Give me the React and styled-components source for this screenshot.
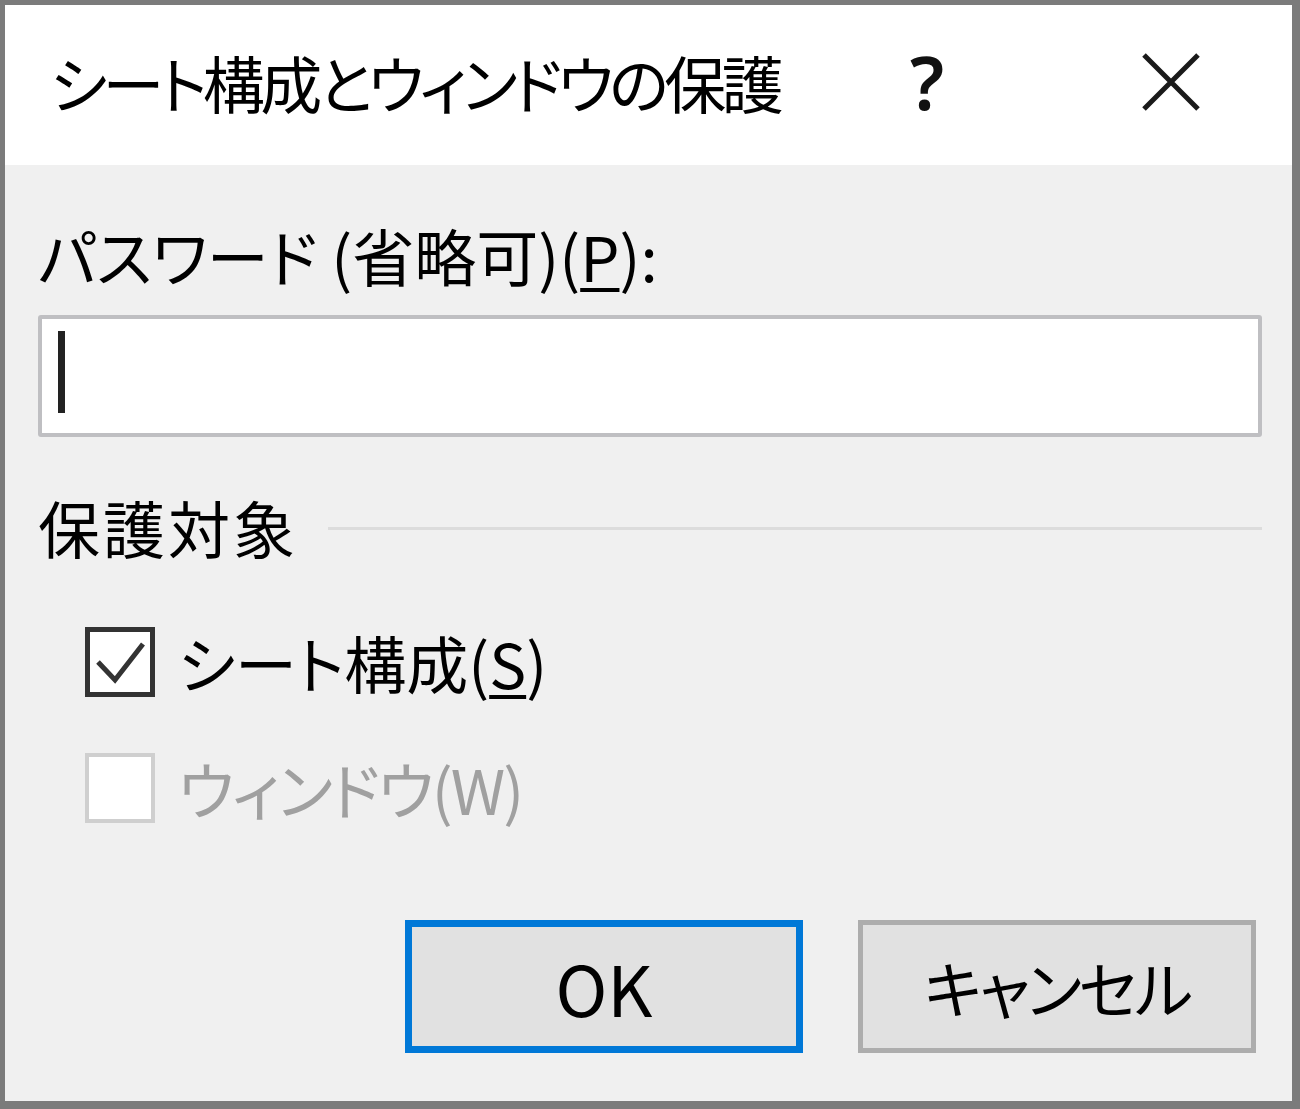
import React from 'react';
import styled, { createGlobalStyle } from 'styled-components';

const Global = createGlobalStyle`
  html, body { margin: 0; padding: 0; background: #f0f0f0; overflow: hidden; }
  body { font-family: "Noto Sans CJK JP", "Noto Sans", sans-serif; }
`;

const Window = styled.div`
  width: 1300px;
  height: 1109px;
  box-sizing: border-box;
  border-style: solid;
  border-color: #7b7b7b;
  border-width: 5px 8px 8px 5px;
  display: flex;
  flex-direction: column;
  background: #f0f0f0;
  font-family: "Noto Sans CJK JP", sans-serif;
  font-feature-settings: "palt";
  color: #000;
`;

const TitleBar = styled.header`
  height: 160px;
  flex: none;
  box-sizing: border-box;
  background: #fff;
  display: flex;
  align-items: center;
  padding: 0 71px 6px 45px;
`;

const Title = styled.h1`
  margin: 0;
  flex: 1;
  font-size: 62px;
  font-weight: 400;
  letter-spacing: -4.5px;
  line-height: 1;
  white-space: nowrap;
`;

const HelpButton = styled.div`
  width: 70px;
  margin-right: 159px;
  text-align: center;
  font-family: "Noto Sans", sans-serif;
  font-size: 74px;
  font-weight: 600;
  line-height: 1;
  color: #111;
`;

const CloseButton = styled.div`
  width: 100px;
  height: 80px;
  display: flex;
  align-items: center;
  justify-content: center;
`;

const Body = styled.main`
  flex: 1;
  display: flex;
  flex-direction: column;
  padding: 0 30px 48px 33px;
`;

const FieldLabel = styled.label`
  margin-top: 53px;
  font-size: 62px;
  line-height: 74px;
  white-space: nowrap;
`;

const Key = styled.span`
  text-decoration: underline;
  text-decoration-thickness: 4px;
  text-underline-offset: 6px;
`;

const TextBox = styled.div`
  margin-top: 23px;
  height: 122px;
  box-sizing: border-box;
  border: 4px solid #bfbfc2;
  border-radius: 3px;
  background: #fff;
  display: flex;
  align-items: center;
  padding-left: 16px;
`;

const Caret = styled.span`
  width: 7px;
  height: 82px;
  margin-top: -8px;
  background: #222;
`;

const GroupHeader = styled.div`
  margin-top: 53px;
  display: flex;
  align-items: center;
  gap: 30px;
`;

const GroupTitle = styled.span`
  font-size: 62px;
  line-height: 74px;
  letter-spacing: 3px;
  white-space: nowrap;
`;

const GroupRule = styled.span`
  flex: 1;
  height: 3px;
  background: #dcdcdc;
  margin-top: 2px;
`;

const CheckList = styled.div`
  margin-top: 61px;
  padding-left: 47px;
  display: flex;
  flex-direction: column;
  gap: 52px;
`;

const CheckRow = styled.div`
  display: flex;
  align-items: center;
  gap: 23px;
  color: ${p => (p.$disabled ? '#a0a0a0' : '#000')};
`;

const Box = styled.span`
  width: 70px;
  height: 70px;
  flex: none;
  box-sizing: border-box;
  border: ${p => (p.$disabled ? '4px solid #cfcfcf' : '5px solid #333')};
  background: #fff;
  display: flex;
  align-items: center;
  justify-content: center;
`;

const CheckText = styled.span`
  font-size: 62px;
  line-height: 74px;
  letter-spacing: ${p => (p.$tight ? '-2px' : '0')};
  white-space: nowrap;
`;

const ButtonRow = styled.div`
  margin-top: auto;
  display: flex;
  justify-content: flex-end;
  gap: 55px;
  padding-right: 6px;
`;

const Button = styled.button`
  width: 398px;
  height: 133px;
  box-sizing: border-box;
  background: #e1e1e1;
  border: ${p => (p.$default ? '7px solid #0078d7' : '5px solid #adadad')};
  font-family: "Noto Sans CJK JP", sans-serif;
  font-feature-settings: "palt";
  font-size: ${p => (p.$latin ? '70px' : '62px')};
  letter-spacing: ${p => (p.$latin ? '0' : '-3px')};
  color: #000;
  padding: 0;
  display: flex;
  align-items: center;
  justify-content: center;
`;

export default function App() {
  return (
    <>
      <Global />
      <Window>
        <TitleBar>
          <Title>シート構成とウィンドウの保護</Title>
          <HelpButton>?</HelpButton>
          <CloseButton>
            <svg width="60" height="60" viewBox="0 0 60 60">
              <path d="M3 3 L57 57 M57 3 L3 57" stroke="#1a1a1a" strokeWidth="5" fill="none" />
            </svg>
          </CloseButton>
        </TitleBar>
        <Body>
          <FieldLabel>パスワード (省略可)(<Key>P</Key>):</FieldLabel>
          <TextBox>
            <Caret />
          </TextBox>
          <GroupHeader>
            <GroupTitle>保護対象</GroupTitle>
            <GroupRule />
          </GroupHeader>
          <CheckList>
            <CheckRow>
              <Box>
                <svg width="60" height="60" viewBox="0 0 60 60">
                  <path d="M8 30 L25 48 L53 12" stroke="#333" strokeWidth="5" fill="none" />
                </svg>
              </Box>
              <CheckText>シート構成(<Key>S</Key>)</CheckText>
            </CheckRow>
            <CheckRow $disabled>
              <Box $disabled />
              <CheckText $tight>ウィンドウ(W)</CheckText>
            </CheckRow>
          </CheckList>
          <ButtonRow>
            <Button $default $latin>OK</Button>
            <Button>キャンセル</Button>
          </ButtonRow>
        </Body>
      </Window>
    </>
  );
}
